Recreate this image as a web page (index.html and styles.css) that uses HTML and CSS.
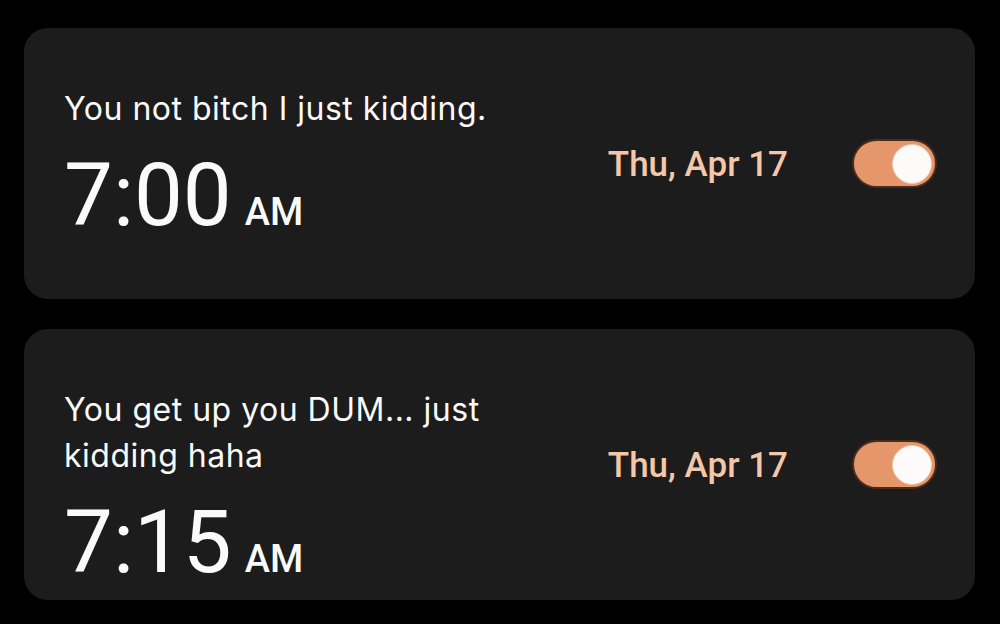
FILE: index.html
```html
<!DOCTYPE html>
<html lang="en">

<head>
    <meta charset="UTF-8">
    <meta name="viewport" content="width=device-width, initial-scale=1.0">
    <title>Alarms</title>
    <link rel="stylesheet" href="styles.css">
</head>

<body>
    <div class="alarm-list">
        <div class="alarm-card">
            <div class="alarm-info">
                <p class="alarm-label">You not bitch I just kidding.</p>
                <div class="alarm-time">
                    <span class="time">7:00</span>
                    <span class="meridiem">AM</span>
                </div>
            </div>
            <div class="alarm-side">
                <span class="alarm-date">Thu, Apr 17</span>
                <span class="switch on"><span class="knob"></span></span>
            </div>
        </div>

        <div class="alarm-card">
            <div class="alarm-info">
                <p class="alarm-label">You get up you DUM... just kidding haha</p>
                <div class="alarm-time">
                    <span class="time">7:15</span>
                    <span class="meridiem">AM</span>
                </div>
            </div>
            <div class="alarm-side">
                <span class="alarm-date">Thu, Apr 17</span>
                <span class="switch on"><span class="knob"></span></span>
            </div>
        </div>
    </div>
</body>

</html>
```

FILE: styles.css
```css
body {
    font-family: 'Roboto', 'Inter', sans-serif;
    background-color: #000;
    color: #fafafa;
    margin: 0;
    padding: 28px 25px 0 24px;
}

.alarm-list {
    display: flex;
    flex-direction: column;
    gap: 30px;
}

.alarm-card {
    background-color: #1c1c1c;
    border-radius: 24px;
    height: 271px;
    box-sizing: border-box;
    padding: 0 38px 0 40px;
    display: flex;
    align-items: stretch;
    overflow: hidden;
}

.alarm-info {
    flex: 1;
    max-width: 470px;
    padding-top: 58px;
}

.alarm-label {
    margin: 0;
    font-family: 'Inter', 'Roboto', sans-serif;
    font-size: 32px;
    line-height: 46px;
    font-weight: 400;
    letter-spacing: 0.5px;
}

.alarm-time {
    display: flex;
    align-items: baseline;
    margin-top: 20px;
    line-height: 1;
}

.time {
    font-size: 87px;
    font-weight: 400;
}

.meridiem {
    font-size: 38px;
    font-weight: 500;
    margin-left: 13px;
}

.alarm-side {
    margin-left: auto;
    display: flex;
    align-items: center;
    gap: 64px;
}

.alarm-date {
    font-size: 35px;
    font-weight: 500;
    color: #f4c7a8;
    padding-top: 2px;
}

.switch {
    width: 85px;
    height: 49px;
    box-sizing: border-box;
    border-radius: 25px;
    background-color: #e6966b;
    border: 2px solid #4a2c1c;
    display: flex;
    align-items: center;
    justify-content: flex-end;
    padding: 0 3px;
}

.knob {
    width: 40px;
    height: 40px;
    box-sizing: border-box;
    border-radius: 50%;
    background-color: #fdfbfa;
    border: 1px solid #f2c9ac;
}
```
